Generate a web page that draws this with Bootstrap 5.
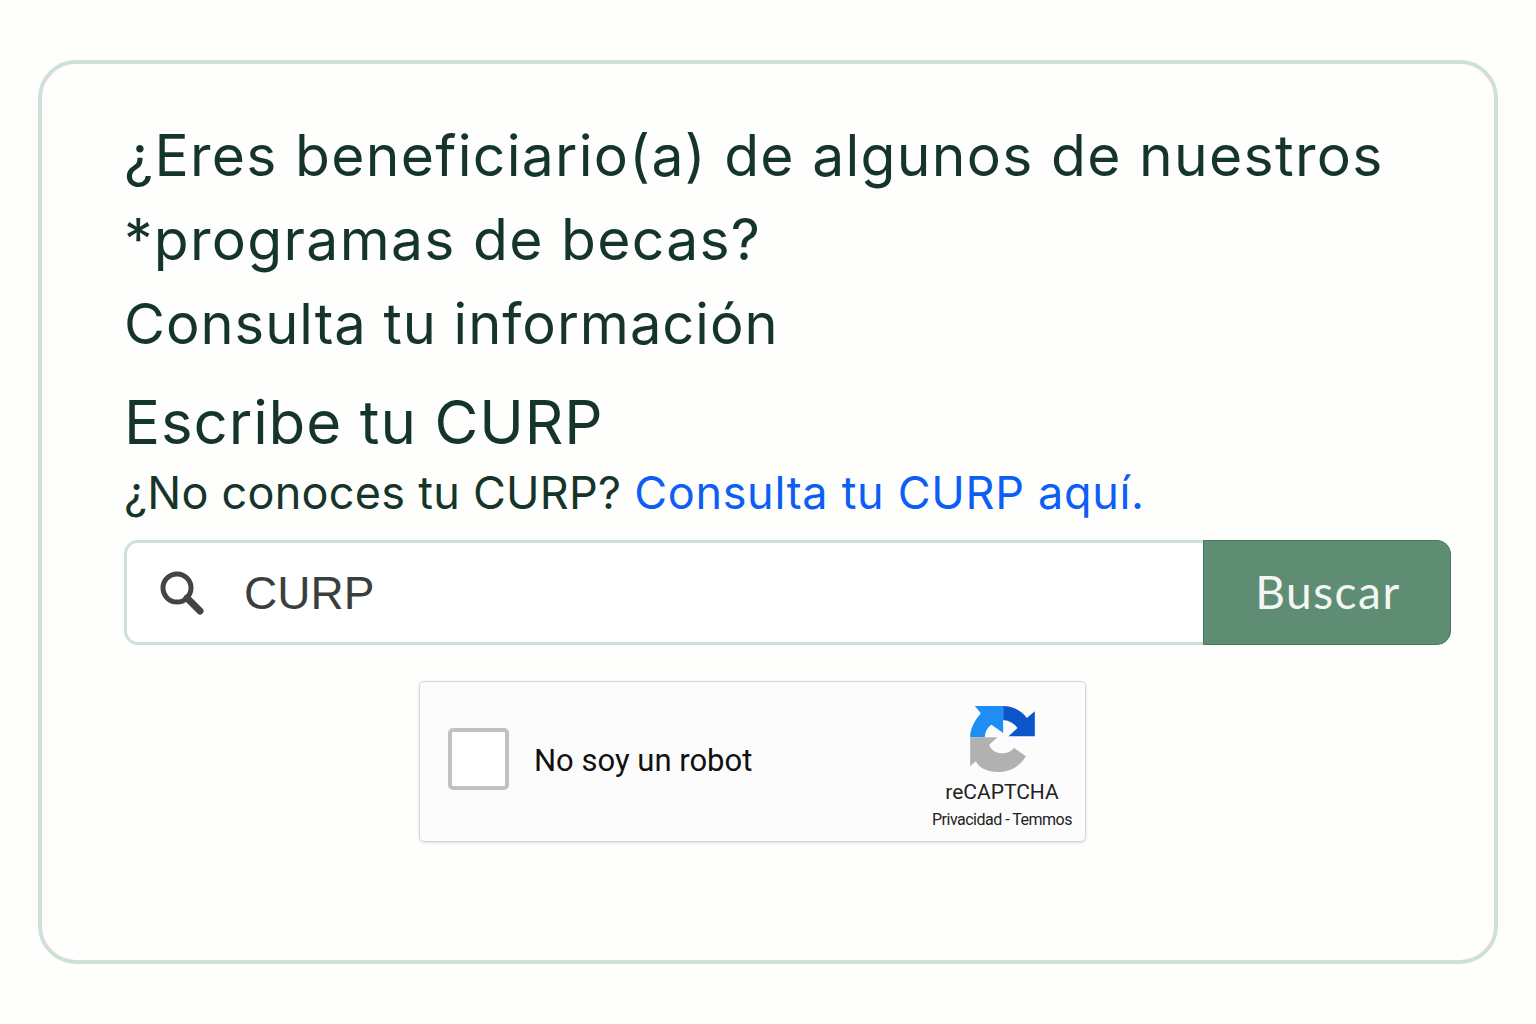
<!DOCTYPE html>
<html lang="es"><head><meta charset="utf-8">
<link href="https://cdn.jsdelivr.net/npm/bootstrap@5.3.0/dist/css/bootstrap.min.css" rel="stylesheet">
<style>
html,body{height:100%}
body{background:#fefefd;font-family:"Inter",sans-serif;color:#16352a;padding:60px 38px}
.panel{height:904px;border:4px solid #cfe0d8;border-radius:38px;background:#fefefd;padding:50px 43px 0 82px}
.ttl{font-size:57px;line-height:84px;margin:0;font-weight:400;white-space:nowrap;letter-spacing:1.3px}
.ttl3{font-size:56px;line-height:84px;margin:0;font-weight:400;white-space:nowrap;letter-spacing:1px}
.ttl2{font-size:60px;line-height:84px;margin:14px 0 0;font-weight:400;letter-spacing:.9px}
.hint{font-size:45px;line-height:60px;margin:-1px 0 0;letter-spacing:.25px}
.hint a{color:#0d5ef4;text-decoration:none;letter-spacing:.7px}
.sbox{height:105px;margin-top:17px}
.sfield{border:3px solid #cfe0d8;border-right:0;border-radius:14px 0 0 14px;background:#fff;padding-left:32px;gap:39px}
.sfield input{border:0;outline:0;font-size:46px;color:#333;padding:2px 0 0;width:100%;background:transparent;font-family:"Liberation Sans",sans-serif}
.sfield input::placeholder{color:#3a3f3d;opacity:1}
.sbtn{width:248px;background:#5f8d74;color:#f2f7f4;font-size:46px;font-family:"Lato",sans-serif;letter-spacing:1.5px;border:1px solid #3f7a5c;border-radius:0 14px 14px 0;padding:0 0 2px 2px}
.capt{width:667px;height:161px;margin:36px 0 0 295px;border:1px solid #d6d6d6;border-radius:5px;background:#fdfcfd;box-shadow:0 1px 3px rgba(0,0,0,.12);padding:0 11px 0 28px;font-family:"Roboto",sans-serif;color:#111}
.cbox{width:61px;height:62px;border:4px solid #c1c1c1;border-radius:5px;background:#fff;margin-top:-6px}
.clabel{font-size:31px;margin-left:25px;margin-top:-1px}
.cbrand{width:144px;font-size:21px;line-height:28px;color:#222;margin-top:17px}
.cbrand svg{margin-bottom:6px}
.cbrand small{display:block;font-size:16px;line-height:28px;white-space:nowrap;letter-spacing:-.5px}
</style></head><body>
<div class="panel">
<h1 class="ttl">¿Eres beneficiario(a) de algunos de nuestros</h1>
<h1 class="ttl">*programas de becas?</h1>
<h1 class="ttl3">Consulta tu información</h1>
<h2 class="ttl2">Escribe tu CURP</h2>
<p class="hint">¿No conoces tu CURP? <a href="#">Consulta tu CURP aquí.</a></p>
<div class="sbox d-flex">
<div class="sfield flex-grow-1 d-flex align-items-center">
<svg width="46" height="46" viewBox="0 0 46 46" class="flex-shrink-0" fill="none" stroke="#444"><circle cx="18" cy="18" r="14" stroke-width="5"/><path d="M28 28 41 41" stroke-width="7" stroke-linecap="round"/></svg>
<input type="text" placeholder="CURP">
</div>
<button class="sbtn" type="button">Buscar</button>
</div>
<div class="capt d-flex align-items-center">
<div class="cbox flex-shrink-0"></div>
<div class="clabel flex-grow-1">No soy un robot</div>
<div class="cbrand text-center">
<svg width="65" height="66" viewBox="18 14 194 198" class="d-block mx-auto"><path d="M32 14H117V95L82 70C70 78 62 92 62 108H18C18 85 28 62 50 36Z" fill="#1e8ef5"/><path d="M117 14C145 14 172 28 188 50L212 30V105H133L160 80C150 66 135 58 117 56Z" fill="#0b57c9"/><path d="M18 108H100L75 130C85 160 130 165 150 140L185 165C165 200 130 212 100 212C70 212 45 200 35 180L18 195Z" fill="#b1b1b1"/></svg>
<div>reCAPTCHA</div><small>Privacidad - Temmos</small>
</div>
</div>
</div>
</body></html>
